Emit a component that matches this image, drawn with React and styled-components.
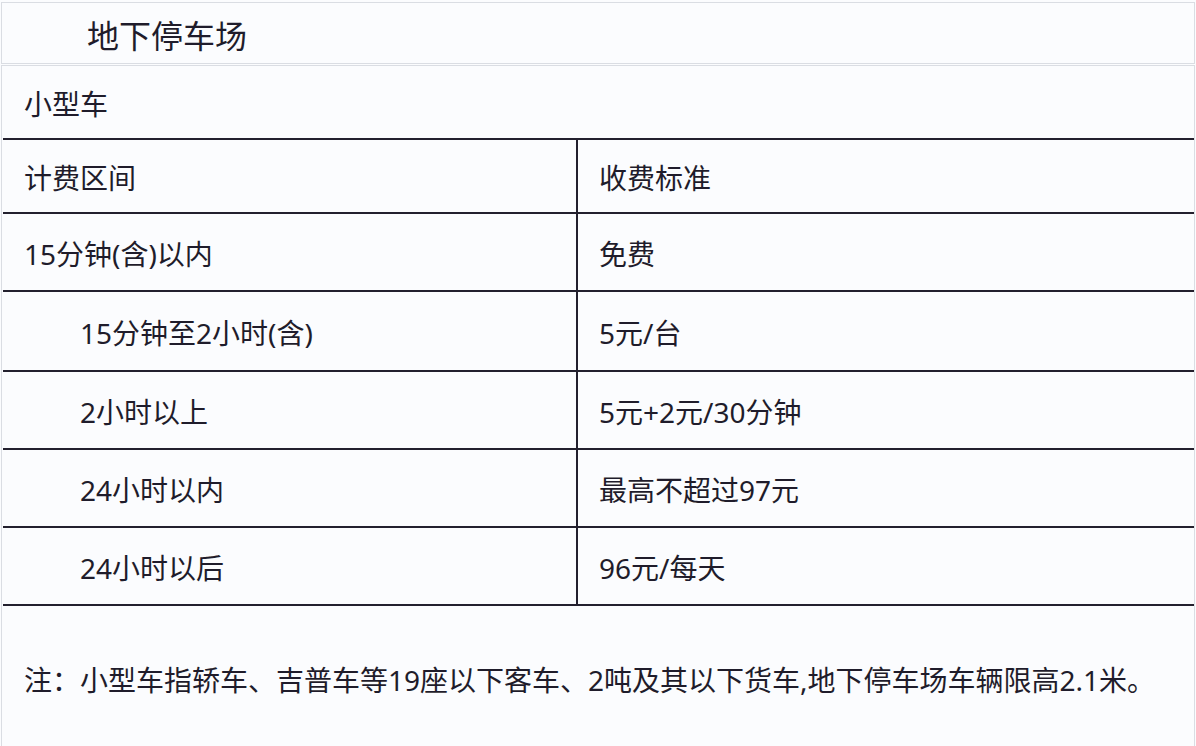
import React from "react";
import styled, { createGlobalStyle } from "styled-components";

const Global = createGlobalStyle`
  html, body { margin: 0; padding: 0; background: #fbfcfe; }
  body { font-family: "Noto Sans", "Noto Sans CJK SC", sans-serif; color: #1f1c2b; }
`;

const Page = styled.div`
  width: 1196px;
  height: 746px;
  box-sizing: border-box;
  padding: 2px 1px 0 1px;
  overflow: hidden;
  background: #fbfcfe;
`;

const TitleBox = styled.div`
  height: 62px;
  box-sizing: border-box;
  border: 1px solid #dadde3;
  display: flex;
  align-items: center;
  padding-left: 85px;
  padding-top: 5px;
  font-size: 32px;
  line-height: 1;
`;

const Frame = styled.div`
  margin-top: 1px;
  border-top: 1px solid #dadde3;
  border-left: 1px solid #dadde3;
  border-right: 1px solid #dadde3;
  height: 700px;
  padding-left: 1px;
`;

const Row = styled.div`
  display: grid;
  grid-template-columns: ${(p) => (p.$span ? "1fr" : "575px 1fr")};
  height: ${(p) => p.$h}px;
  border-bottom: 2px solid #23202e;
`;

const Cell = styled.div`
  display: flex;
  align-items: center;
  padding-left: ${(p) => (p.$indent ? 77 : 21)}px;
  padding-top: 3px;
  font-size: 28px;
  line-height: 1;
  white-space: nowrap;
  border-right: ${(p) => (p.$divider ? "2px solid #23202e" : "none")};
`;

const Note = styled.div`
  height: 140px;
  display: flex;
  align-items: center;
  padding-left: 21px;
  padding-top: 4px;
  font-size: 28px;
  line-height: 1;
  white-space: nowrap;
`;

const rows = [
  { h: 72, left: "计费区间", right: "收费标准" },
  { h: 76, left: "15分钟(含)以内", right: "免费" },
  { h: 78, left: "15分钟至2小时(含)", right: "5元/台", indent: true },
  { h: 76, left: "2小时以上", right: "5元+2元/30分钟", indent: true },
  { h: 76, left: "24小时以内", right: "最高不超过97元", indent: true },
  { h: 76, left: "24小时以后", right: "96元/每天", indent: true },
];

export default function App() {
  return (
    <>
      <Global />
      <Page>
        <TitleBox>地下停车场</TitleBox>
        <Frame>
          <Row $span $h={72}>
            <Cell>小型车</Cell>
          </Row>
          {rows.map((r, i) => (
            <Row key={i} $h={r.h}>
              <Cell $divider $indent={r.indent}>{r.left}</Cell>
              <Cell>{r.right}</Cell>
            </Row>
          ))}
          <Note>注：小型车指轿车、吉普车等19座以下客车、2吨及其以下货车,地下停车场车辆限高2.1米。</Note>
        </Frame>
      </Page>
    </>
  );
}
